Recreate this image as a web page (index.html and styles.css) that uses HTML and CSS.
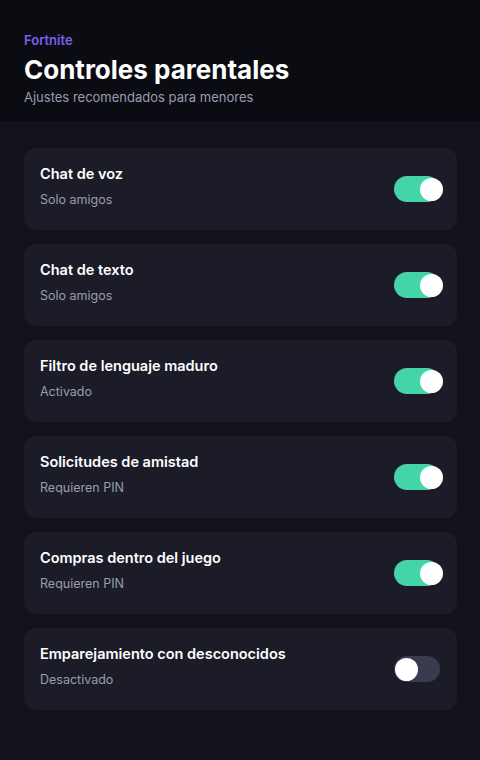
FILE: index.html
```html
<!DOCTYPE html>
<html>
<head>
    <title>Controles parentales</title>
    <link rel="stylesheet" href="styles.css">
</head>
<body>
    <div class="header">
        <div class="eyebrow">Fortnite</div>
        <h1>Controles parentales</h1>
        <div class="subtitle">Ajustes recomendados para menores</div>
    </div>

    <div class="list">
        <div class="card">
            <div class="info">
                <div class="name">Chat de voz</div>
                <div class="value">Solo amigos</div>
            </div>
            <div class="toggle on"><span class="knob"></span></div>
        </div>
        <div class="card">
            <div class="info">
                <div class="name">Chat de texto</div>
                <div class="value">Solo amigos</div>
            </div>
            <div class="toggle on"><span class="knob"></span></div>
        </div>
        <div class="card">
            <div class="info">
                <div class="name">Filtro de lenguaje maduro</div>
                <div class="value">Activado</div>
            </div>
            <div class="toggle on"><span class="knob"></span></div>
        </div>
        <div class="card">
            <div class="info">
                <div class="name">Solicitudes de amistad</div>
                <div class="value">Requieren PIN</div>
            </div>
            <div class="toggle on"><span class="knob"></span></div>
        </div>
        <div class="card">
            <div class="info">
                <div class="name">Compras dentro del juego</div>
                <div class="value">Requieren PIN</div>
            </div>
            <div class="toggle on"><span class="knob"></span></div>
        </div>
        <div class="card">
            <div class="info">
                <div class="name">Emparejamiento con desconocidos</div>
                <div class="value">Desactivado</div>
            </div>
            <div class="toggle"><span class="knob"></span></div>
        </div>
    </div>
</body>
</html>
```

FILE: styles.css
```css
body {
    font-family: Inter, "Noto Sans", sans-serif;
    background-color: #11121a;
    color: #ffffff;
    margin: 0;
    padding: 0;
}

.header {
    background-color: #0b0c12;
    padding: 30px 24px 14px;
}

.eyebrow {
    color: #7b5ff0;
    font-size: 13px;
    font-weight: 600;
    line-height: 20px;
}

h1 {
    font-size: 26px;
    font-weight: 700;
    line-height: 34px;
    margin: 3px 0 0;
}

.subtitle {
    color: #9a9cae;
    font-size: 13px;
    line-height: 20px;
}

.list {
    display: flex;
    flex-direction: column;
    gap: 14px;
    padding: 27px 23px 27px 24px;
}

.card {
    display: flex;
    align-items: center;
    justify-content: space-between;
    background: #1b1c28;
    border-radius: 12px;
    padding: 16px 16px 20px;
}

.name {
    font-size: 14.5px;
    font-weight: 600;
    line-height: 20px;
}

.value {
    color: #9a9cae;
    font-size: 12.5px;
    line-height: 20px;
    margin-top: 6px;
}

.toggle {
    position: relative;
    width: 46px;
    height: 26px;
    border-radius: 13px;
    background: #3a3b4e;
    margin: 4px 1px 0 0;
}

.toggle.on {
    background: #45d3a9;
}

.knob {
    position: absolute;
    top: 2px;
    left: 1px;
    width: 23px;
    height: 23px;
    border-radius: 50%;
    background: #ffffff;
}

.toggle.on .knob {
    left: 26px;
}
```
